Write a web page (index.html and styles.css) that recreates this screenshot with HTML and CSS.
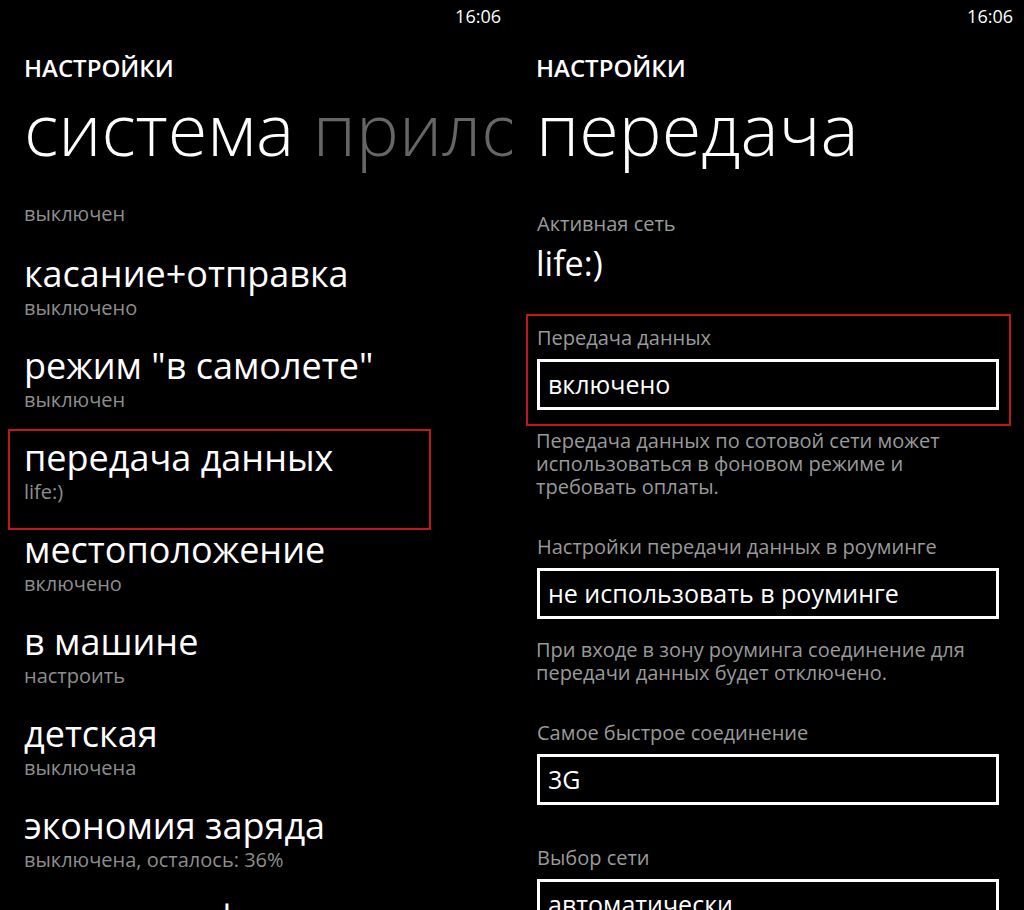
FILE: index.html
```html
<!DOCTYPE html>
<html lang="ru">
<head>
    <meta charset="UTF-8">
    <meta name="viewport" content="width=device-width, initial-scale=1.0">
    <title>Настройки</title>
    <link rel="stylesheet" href="styles.css">
</head>
<body>
    <div class="screens">
        <!-- System pivot -->
        <div class="phone">
            <div class="status-bar">16:06</div>
            <div class="app-title">НАСТРОЙКИ</div>
            <div class="pivot-title">система <span class="pivot-next">приложения</span></div>

            <div class="settings-list">
                <div class="setting-sub setting-cut">выключен</div>
                <div class="setting">
                    <div class="setting-name">касание+отправка</div>
                    <div class="setting-sub">выключено</div>
                </div>
                <div class="setting">
                    <div class="setting-name">режим "в самолете"</div>
                    <div class="setting-sub">выключен</div>
                </div>
                <div class="setting highlighted">
                    <div class="setting-name">передача данных</div>
                    <div class="setting-sub">life:)</div>
                </div>
                <div class="setting">
                    <div class="setting-name">местоположение</div>
                    <div class="setting-sub">включено</div>
                </div>
                <div class="setting">
                    <div class="setting-name">в машине</div>
                    <div class="setting-sub">настроить</div>
                </div>
                <div class="setting">
                    <div class="setting-name">детская</div>
                    <div class="setting-sub">выключена</div>
                </div>
                <div class="setting">
                    <div class="setting-name">экономия заряда</div>
                    <div class="setting-sub">выключена, осталось: 36%</div>
                </div>
                <div class="setting">
                    <div class="setting-name">поиск телефона</div>
                    <div class="setting-sub">включено</div>
                </div>
            </div>
        </div>

        <!-- Cellular page -->
        <div class="phone">
            <div class="status-bar">16:06</div>
            <div class="app-title">НАСТРОЙКИ</div>
            <div class="pivot-title">передача</div>

            <div class="page-body">
                <div class="field-label">Активная сеть</div>
                <div class="network-name">life:)</div>

                <div class="field highlighted">
                    <div class="field-label">Передача данных</div>
                    <div class="picker">включено</div>
                </div>
                <div class="field-note">Передача данных по сотовой сети может использоваться в фоновом режиме и требовать оплаты.</div>

                <div class="field">
                    <div class="field-label">Настройки передачи данных в роуминге</div>
                    <div class="picker">не использовать в роуминге</div>
                </div>
                <div class="field-note">При входе в зону роуминга соединение для передачи данных будет отключено.</div>

                <div class="field">
                    <div class="field-label">Самое быстрое соединение</div>
                    <div class="picker">3G</div>
                </div>
                <div class="field-gap"></div>

                <div class="field">
                    <div class="field-label">Выбор сети</div>
                    <div class="picker">автоматически</div>
                </div>
            </div>
        </div>
    </div>
</body>
</html>
```

FILE: styles.css
```css
:root {
    --background-color: #000000;
    --text-color: #ffffff;
    --muted-color: #8e8e8e;
    --label-color: #9a9a9a;
    --dim-color: #666666;
    --accent-red: #c0161e;
}

* {
    margin: 0;
    padding: 0;
    box-sizing: border-box;
    font-family: 'Open Sans', 'Noto Sans', sans-serif;
}

body {
    background-color: var(--background-color);
    color: var(--text-color);
    overflow: hidden;
}

.screens {
    display: flex;
    width: 1024px;
    height: 910px;
}

.phone {
    width: 512px;
    height: 910px;
    overflow: hidden;
    padding-left: 24px;
}

.status-bar {
    font-size: 18px;
    line-height: 32px;
    text-align: right;
    padding-right: 11px;
}

.app-title {
    margin-top: 20px;
    font-size: 24px;
    font-weight: 600;
    line-height: 32px;
}

.pivot-title {
    margin-top: 0;
    font-size: 72px;
    font-weight: 300;
    line-height: 88px;
    white-space: nowrap;
}

.pivot-next {
    color: var(--dim-color);
}

/* Left list */
.settings-list {
    margin-top: 30px;
}

.setting {
    position: relative;
    padding-top: 2px;
    margin-bottom: 22px;
}

.setting-name {
    font-size: 36px;
    line-height: 44px;
    white-space: nowrap;
}

.setting-sub {
    font-size: 20px;
    line-height: 24px;
    color: var(--muted-color);
}

.setting-cut {
    margin-bottom: 24px;
}

.setting.highlighted::after {
    content: "";
    position: absolute;
    top: -5px;
    left: -16px;
    width: 419px;
    height: 97px;
    border: 2px solid var(--accent-red);
}

/* Right page */
.page-body {
    margin-top: 40px;
    padding-right: 25px;
}

.field-label {
    font-size: 20px;
    line-height: 24px;
    color: var(--label-color);
    padding-left: 1px;
}

.network-name {
    margin-top: 7px;
    font-size: 34px;
    line-height: 40px;
}

.field {
    position: relative;
    margin-top: 43px;
}

.field-note + .field {
    margin-top: 37px;
}

.field-gap + .field {
    margin-top: 41px;
}

.picker {
    margin-top: 9px;
    margin-left: 1px;
    height: 51px;
    border: 3px solid var(--text-color);
    padding: 0 8px;
    font-size: 25px;
    line-height: 45px;
    white-space: nowrap;
}

.field.highlighted::after {
    content: "";
    position: absolute;
    top: -12px;
    left: -10px;
    width: 481px;
    height: 108px;
    border: 2px solid var(--accent-red);
}

.field-note {
    margin-top: 19px;
    font-size: 20px;
    line-height: 23px;
    color: var(--label-color);
}
```
